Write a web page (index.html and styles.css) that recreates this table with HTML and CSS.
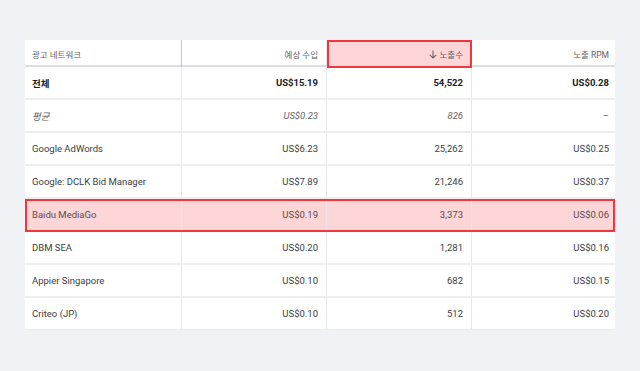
FILE: index.html
```html
<!DOCTYPE html>
<html lang="ko">
<head>
<meta charset="utf-8">
<link rel="stylesheet" href="styles.css">
</head>
<body>
<div class="table">
  <div class="row head">
    <div class="cell name first-head">광고 네트워크</div>
    <div class="cell num">예상 수입</div>
    <div class="cell num mark"><svg class="arrow" width="8" height="9" viewBox="0 0 8 9"><path d="M4 0.5V8M0.8 4.8L4 8L7.2 4.8" fill="none" stroke="#6b6466" stroke-width="1.1"/></svg>노출수</div>
    <div class="cell num">노출 RPM</div>
  </div>
  <div class="row total">
    <div class="cell name">전체</div>
    <div class="cell num">US$15.19</div>
    <div class="cell num">54,522</div>
    <div class="cell num">US$0.28</div>
  </div>
  <div class="row avg">
    <div class="cell name">평균</div>
    <div class="cell num">US$0.23</div>
    <div class="cell num">826</div>
    <div class="cell num dash">–</div>
  </div>
  <div class="row">
    <div class="cell name">Google AdWords</div>
    <div class="cell num">US$6.23</div>
    <div class="cell num">25,262</div>
    <div class="cell num">US$0.25</div>
  </div>
  <div class="row">
    <div class="cell name">Google: DCLK Bid Manager</div>
    <div class="cell num">US$7.89</div>
    <div class="cell num">21,246</div>
    <div class="cell num">US$0.37</div>
  </div>
  <div class="row mark-row">
    <div class="cell name">Baidu MediaGo</div>
    <div class="cell num">US$0.19</div>
    <div class="cell num">3,373</div>
    <div class="cell num">US$0.06</div>
  </div>
  <div class="row">
    <div class="cell name">DBM SEA</div>
    <div class="cell num">US$0.20</div>
    <div class="cell num">1,281</div>
    <div class="cell num">US$0.16</div>
  </div>
  <div class="row">
    <div class="cell name">Appier Singapore</div>
    <div class="cell num">US$0.10</div>
    <div class="cell num">682</div>
    <div class="cell num">US$0.15</div>
  </div>
  <div class="row last">
    <div class="cell name">Criteo (JP)</div>
    <div class="cell num">US$0.10</div>
    <div class="cell num">512</div>
    <div class="cell num">US$0.20</div>
  </div>
</div>
</body>
</html>
```

FILE: styles.css
```css
html, body {
  margin: 0;
  padding: 0;
  background: #f1f2f6;
}
body {
  padding: 40px 25px 0 25px;
  font-family: Roboto, "Noto Sans CJK KR", sans-serif;
  font-size: 9.5px;
  color: #3c4043;
}
.table {
  width: 590px;
  background: #fff;
  border-bottom: 1px solid #e6e8ec;
}
.row {
  display: grid;
  grid-template-columns: 157px 145px 145px 143px;
  height: 33px;
  border-bottom: 2px solid #eceef1;
  box-sizing: border-box;
}
.row.last {
  border-bottom: none;
  height: 31px;
}
.cell {
  display: flex;
  align-items: center;
  padding: 0 7px;
  border-right: 1px solid #e6e8ec;
  box-sizing: border-box;
  white-space: nowrap;
}
.cell:last-child {
  border-right: none;
  padding-right: 6px;
}
.num {
  justify-content: flex-end;
  padding-right: 8px;
}
.head {
  height: 27px;
  border-bottom: 2px solid #dcdee3;
  font-size: 8.5px;
  color: #5f6368;
}
.head .first-head {
  border-right: 1px solid #a9cff5;
}
.head .mark {
  background: #fed6d7;
  outline: 2px solid #f2363b;
  outline-offset: -2px;
  height: 28px;
  position: relative;
  z-index: 1;
}
.arrow {
  margin-right: 3px;
}
.total {
  font-weight: 700;
  color: #202124;
}
.avg {
  font-style: italic;
  color: #5f6368;
}
.dash {
  font-style: normal;
}
.mark-row {
  background: #fed6d7;
  outline: 2px solid #f2363b;
  outline-offset: -2px;
  border-bottom-color: #fed6d7;
  color: #5a4a4c;
}
```
